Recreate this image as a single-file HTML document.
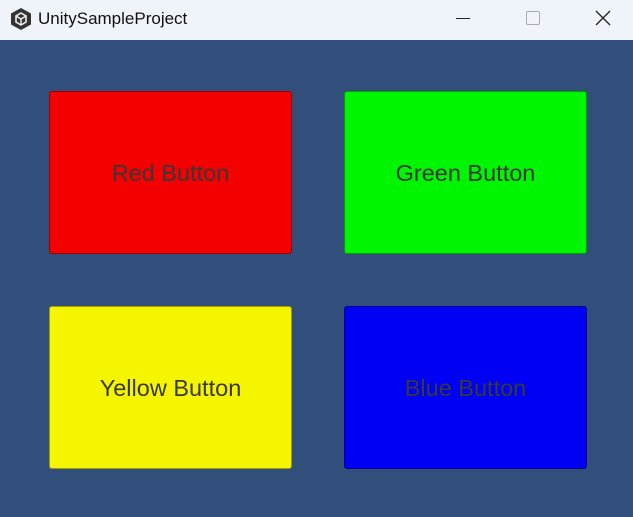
<!DOCTYPE html>
<html><head><style>
html,body{margin:0;padding:0;width:633px;height:517px;overflow:hidden;background:#314f7a;font-family:"Liberation Sans",sans-serif}
.bar{position:absolute;left:0;top:0;width:633px;height:40px;background:#eff3fa}
.title{position:absolute;left:38px;top:9px;font-size:17px;color:#111}
.btn{position:absolute;width:243px;height:163px;border-radius:3px;box-sizing:border-box;border:1px solid rgba(0,0,0,0.35);display:flex;align-items:center;justify-content:center;font-size:23.5px;color:#383838;padding-top:2px}
</style></head><body>
<div class="bar">
<svg style="position:absolute;left:10px;top:7px" width="22" height="24" viewBox="0 0 22 24"><polygon points="11,1 21,6.5 21,17.5 11,23 1,17.5 1,6.5" fill="#333"/><polygon points="11,6 16,9 16,15 11,18 6,15 6,9" fill="none" stroke="#eee" stroke-width="1.6"/><line x1="11" y1="12" x2="11" y2="18" stroke="#eee" stroke-width="1.4"/><line x1="11" y1="12" x2="6" y2="9" stroke="#eee" stroke-width="1.4"/><line x1="11" y1="12" x2="16" y2="9" stroke="#eee" stroke-width="1.4"/></svg>
<div class="title">UnitySampleProject</div>
<div style="position:absolute;left:456px;top:18px;width:14px;height:1px;background:#222"></div>
<div style="position:absolute;left:526px;top:11px;width:12px;height:12px;border:1px solid #aaa;border-radius:2px"></div>
<svg style="position:absolute;left:595px;top:10px" width="16" height="16"><path d="M1 1L15 15M15 1L1 15" stroke="#222" stroke-width="1.3"/></svg>
</div>
<div class="btn" style="left:49px;top:91px;background:#f50000">Red Button</div>
<div class="btn" style="left:344px;top:91px;background:#00f500">Green Button</div>
<div class="btn" style="left:49px;top:306px;background:#f5f500">Yellow Button</div>
<div class="btn" style="left:344px;top:306px;background:#0000f5">Blue Button</div>
</body></html>
